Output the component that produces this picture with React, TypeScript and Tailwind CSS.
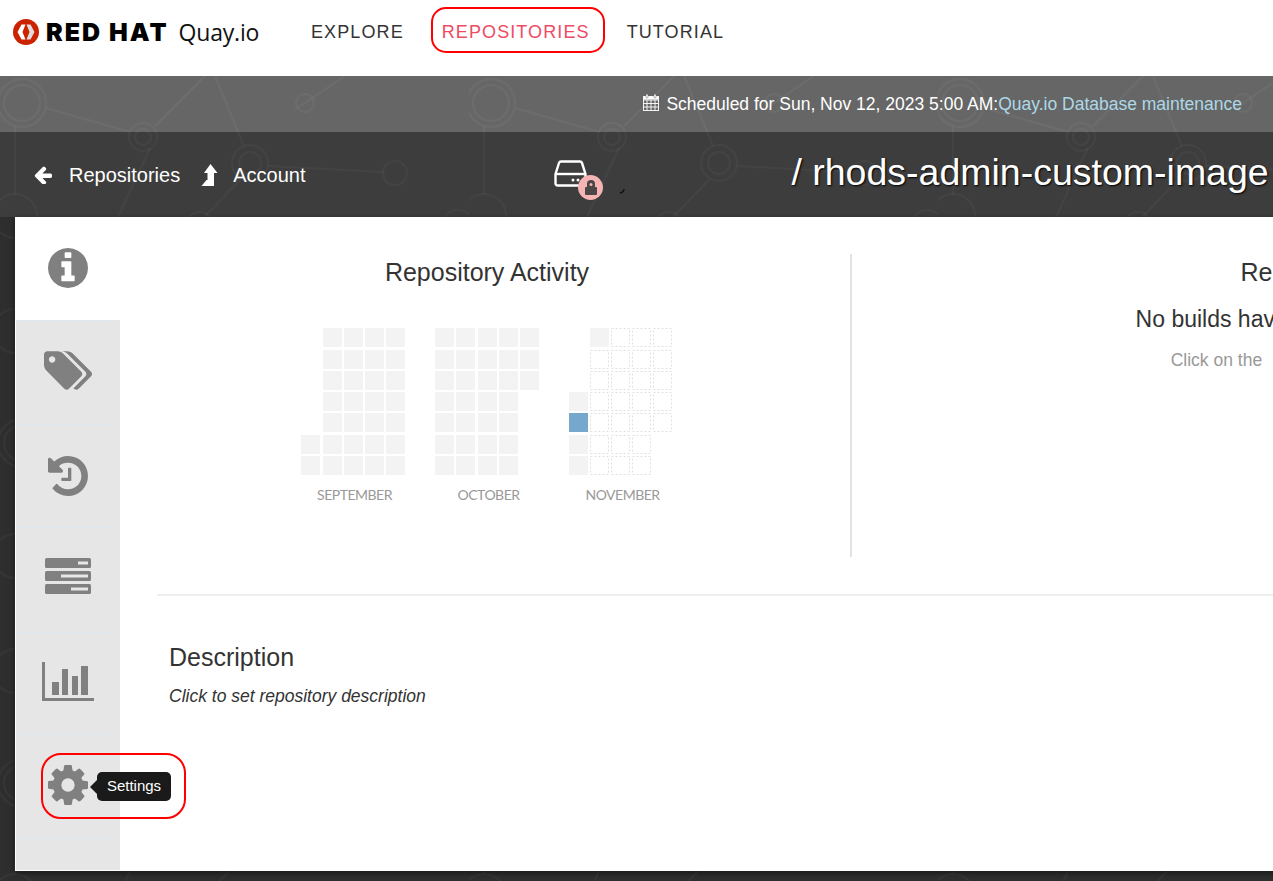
const sans = "font-['Liberation_Sans',Arial,sans-serif]";

const NetworkPattern = () => (
    <svg className="absolute inset-0 w-full h-full" aria-hidden="true">
        <defs>
            <pattern id="net" x="0" y="0" width="469" height="340" patternUnits="userSpaceOnUse">
                <g fill="none" stroke="#ffffff" strokeOpacity="0.035" strokeWidth="2">
                    <circle cx="22" cy="27" r="24" />
                    <circle cx="22" cy="27" r="18" />
                    <circle cx="143" cy="61" r="14" />
                    <circle cx="143" cy="61" r="8" />
                    <circle cx="250" cy="87" r="18" />
                    <circle cx="250" cy="87" r="11" />
                    <circle cx="395" cy="97" r="12" />
                    <circle cx="305" cy="27" r="9" />
                    <circle cx="200" cy="150" r="14" />
                    <circle cx="458" cy="150" r="16" />
                    <circle cx="15" cy="140" r="22" />
                    <circle cx="15" cy="255" r="22" />
                    <path d="M46 32 L130 56 M155 50 L205 0 M150 72 L100 180 M215 0 L244 70 M268 90 L383 96 M296 33 L345 0 M240 104 L205 140 M15 50 L15 118 M15 162 L15 233" />
                </g>
            </pattern>
        </defs>
        <rect width="100%" height="100%" fill="url(#net)" />
    </svg>
);

const Logo = () => (
    <div className="flex items-center ml-[13px] w-[250px]">
        <svg width="26" height="26" viewBox="0 0 26 26" className="shrink-0">
            <circle cx="13" cy="13" r="13" fill="#cc2200" />
            <path d="M8.500 5.500 H12.500 L9.500 13 L12.500 20.500 H8.500 L4.500 13 Z" fill="#ffffff" />
            <path d="M17.500 5.500 H13.500 L16.500 13 L13.500 20.500 H17.500 L21.500 13 Z" fill="#dddddd" />
        </svg>
        <span className="ml-[7px] font-['Inter',sans-serif] font-black text-[25px] leading-none tracking-[2px] text-black whitespace-pre">
            RED HAT
        </span>
        <span className="ml-[10px] font-['Open_Sans',sans-serif] text-[23px] leading-none tracking-[-0.2px] text-[#111]">
            Quay.io
        </span>
    </div>
);

const Header = () => (
    <div className="relative h-[76px] bg-white flex items-start">
        <div className="h-[64px] flex items-center">
            <Logo />
        </div>
        <nav className="h-[64px] flex items-center ml-[48px] text-[18px] tracking-[1.1px] text-[#333]">
            <a className="mr-[38px]">EXPLORE</a>
            <a className="mr-[37px] text-[#ee4b63]">REPOSITORIES</a>
            <a>TUTORIAL</a>
        </nav>
        <div className="absolute left-[431px] top-[7px] w-[174px] h-[46px] rounded-[15px] border-2 border-[#ff0000]" />
    </div>
);

const CalendarIcon = () => (
    <svg width="16" height="17" viewBox="0 0 16 17" className="shrink-0 mt-[-3px]">
        <g fill="none" stroke="#ffffff" strokeWidth="1" strokeOpacity="0.9">
            <rect x="0.500" y="2.500" width="15" height="14" />
            <path d="M0.500 6 H15.500 M0.500 9.500 H15.500 M0.500 13 H15.500 M4 6 V16.500 M8 6 V16.500 M12 6 V16.500" />
        </g>
        <rect x="0.500" y="2.500" width="15" height="3" fill="#ffffff" />
        <rect x="3" y="0" width="2" height="4" rx="1" fill="#ffffff" stroke="#666666" strokeWidth="0.500" />
        <rect x="11" y="0" width="2" height="4" rx="1" fill="#ffffff" stroke="#666666" strokeWidth="0.500" />
    </svg>
);

const MaintenanceBar = () => (
    <div className={`relative h-[56px] bg-white/[0.27] flex items-center justify-end pr-[31px] text-[17.5px] text-white ${sans}`}>
        <CalendarIcon />
        <span className="ml-[7px]">Scheduled for Sun, Nov 12, 2023 5:00 AM:</span>
        <a className="text-[#add8e6]">Quay.io Database maintenance</a>
    </div>
);

const RepoIcon = () => (
    <div className="relative w-[36px] h-[30px]">
        <svg width="33" height="28" viewBox="0 0 33 28" className="absolute left-0 top-[2px]">
            <g fill="none" stroke="#ffffff" strokeWidth="2.400" strokeLinejoin="round">
                <path d="M7 1.500 H26 Q27.500 1.500 28 3 L31.500 14 V23 Q31.500 25.500 29 25.500 H4 Q1.500 25.500 1.500 23 V14 L5 3 Q5.500 1.500 7 1.500 Z" />
                <path d="M1.500 14 H31.500" />
            </g>
            <circle cx="19" cy="20" r="1.500" fill="#ffffff" />
            <circle cx="24" cy="20" r="1.500" fill="#ffffff" />
        </svg>
        {/* private repo badge */}
        <div className="absolute left-[24px] top-[17px] w-[25px] h-[25px] rounded-full bg-[#f4b4b4] flex items-center justify-center">
            <svg width="14" height="17" viewBox="0 0 14 17">
                <path d="M3 8 V5 a4 4 0 0 1 8 0 V8 h1 a1 1 0 0 1 1 1 v6 a1 1 0 0 1 -1 1 H2 a1 1 0 0 1 -1 -1 V9 a1 1 0 0 1 1 -1 Z" fill="#4a4646" />
                <circle cx="7" cy="5.500" r="1.500" fill="#f4b4b4" />
            </svg>
        </div>
    </div>
);

const TitleBar = () => (
    <div className={`relative h-[85px] bg-white/[0.07] flex items-center whitespace-nowrap text-white ${sans}`}>
        <div className="flex items-center ml-[34px] text-[20px]">
            <svg width="18" height="18" viewBox="128 128 1536 1536" fill="#ffffff">
                <path d="M1664 896v128q0 53-32.500 90.500t-84.500 37.500h-704l293 294q38 36 38 90t-38 90l-75 76q-37 37-90 37-52 0-91-37l-651-652q-37-37-37-90 0-52 37-91l651-650q38-38 91-38 52 0 90 38l75 74q38 38 38 91t-38 91l-293 293h704q52 0 84.500 37.500t32.500 90.500z" />
            </svg>
            <span className="ml-[17px]">Repositories</span>
            <svg width="17" height="22" viewBox="0 0 17 22" className="ml-[21px]" fill="#ffffff">
                <path d="M9.500 0 L16.500 9 H13 V22 H0.500 L5.500 16 H6.500 V9 H3 Z" />
            </svg>
            <span className="ml-[15px]">Account</span>
        </div>
        <div className="ml-[249px] mt-[-3px]">
            <RepoIcon />
        </div>
        <svg width="6" height="5" viewBox="0 0 6 5" className="ml-[29px] mt-[33px]" fill="none" stroke="#111111" strokeWidth="1.400">
            <path d="M5 0 Q5 3 1 4" />
        </svg>
        <h1 className="ml-[166px] text-[37.500px] font-normal leading-none [text-shadow:1px_1px_2px_#000] mt-[-3px]">
            / rhods-admin-custom-image
        </h1>
    </div>
);

const InfoIcon = () => (
    <svg width="40" height="40" viewBox="128 128 1536 1536" fill="#808080">
        <path d="M1152 1376v-160q0-14-9-23t-23-9h-96v-512q0-14-9-23t-23-9h-320q-14 0-23 9t-9 23v160q0 14 9 23t23 9h96v320h-96q-14 0-23 9t-9 23v160q0 14 9 23t23 9h448q14 0 23-9t9-23zm-128-896v-160q0-14-9-23t-23-9h-192q-14 0-23 9t-9 23v160q0 14 9 23t23 9h192q14 0 23-9t9-23zm640 416q0 209-103 385.500t-279.500 279.500-385.500 103-385.500-103-279.500-279.500-103-385.500 103-385.500 279.500-279.500 385.500-103 385.500 103 279.500 279.500 103 385.500z" />
    </svg>
);

const TagsIcon = () => (
    <svg width="48" height="39" viewBox="0 128 1899 1516" fill="#808080">
        <path d="M448 448q0-53-37.500-90.500t-90.500-37.500-90.500 37.500-37.500 90.500 37.500 90.500 90.500 37.500 90.500-37.500 37.500-90.500zm1067 576q0 53-37 90l-491 492q-39 37-91 37-53 0-90-37l-715-716q-38-37-64.500-101t-26.500-117v-416q0-52 38-90t90-38h416q53 0 117 26.500t102 64.500l715 714q37 39 37 91zm384 0q0 53-37 90l-491 492q-39 37-91 37-36 0-59-14t-53-45l470-470q37-37 37-90 0-52-37-91l-715-714q-38-38-102-64.500t-117-26.500h224q53 0 117 26.500t102 64.500l715 714q37 39 37 91z" />
    </svg>
);

const HistoryIcon = () => (
    <svg width="40" height="40" viewBox="128 128 1536 1536" fill="#808080">
        <path d="M1664 896q0 156-61 298t-164 245-245 164-298 61q-172 0-327-72.500t-264-204.500q-7-10-6.500-22.500t8.500-20.500l137-138q10-9 25-9 16 2 23 12 73 95 179 147t225 52q104 0 198.500-40.500t163.500-109.500 109.500-163.500 40.500-198.500-40.500-198.500-109.500-163.500-163.500-109.500-198.500-40.500q-98 0-188 35.500t-160 101.500l137 138q31 30 14 69-17 40-59 40h-448q-26 0-45-19t-19-45v-448q0-42 40-59 39-17 69 14l130 129q107-101 244.500-156.500t284.500-55.500q156 0 298 61t245 164 164 245 61 298zm-640-288v448q0 14-9 23t-23 9h-320q-14 0-23-9t-9-23v-64q0-14 9-23t23-9h224v-352q0-14 9-23t23-9h64q14 0 23 9t9 23z" />
    </svg>
);

const ServerIcon = () => (
    <svg width="46" height="36" viewBox="0 0 46 36">
        <rect x="0" y="0" width="46" height="10" rx="1.500" fill="#808080" />
        <rect x="0" y="13" width="46" height="10" rx="1.500" fill="#808080" />
        <rect x="0" y="26" width="46" height="10" rx="1.500" fill="#808080" />
        <rect x="33" y="3.500" width="10" height="3" fill="#e6e6e6" />
        <rect x="16" y="16.500" width="27" height="3" fill="#e6e6e6" />
        <rect x="26" y="29.500" width="17" height="3" fill="#e6e6e6" />
    </svg>
);

const ChartIcon = () => (
    <svg width="52" height="39" viewBox="0 0 52 39" fill="#808080">
        <rect x="0" y="0" width="3" height="39" />
        <rect x="0" y="36" width="52" height="3" />
        <rect x="10" y="20" width="7" height="13" />
        <rect x="20" y="7" width="6" height="26" />
        <rect x="30" y="14" width="6" height="19" />
        <rect x="39" y="4" width="7" height="29" />
    </svg>
);

const CogIcon = () => (
    <svg width="40" height="40" viewBox="0 0 1536 1536" fill="#808080">
        <path d="M1024 768q0-106-75-181t-181-75-181 75-75 181 75 181 181 75 181-75 75-181zm512-109v222q0 12-8 23t-20 13l-185 28q-19 54-39 91 35 50 107 138 10 12 10 25t-9 23q-27 37-99 108t-94 71q-12 0-26-9l-138-108q-44 23-91 38-16 136-29 186-7 28-36 28h-222q-14 0-24.500-8.500t-11.500-21.500l-28-184q-49-16-90-37l-141 107q-10 9-25 9-14 0-25-11-126-114-165-168-7-10-7-23 0-12 8-23 15-21 51-66.500t54-70.500q-27-50-41-99l-183-27q-13-2-21-12.500t-8-23.500v-222q0-12 8-23t19-13l186-28q14-46 39-92-40-57-107-138-10-12-10-24 0-10 9-23 26-36 98.500-107.500t94.500-71.500q13 0 26 10l138 107q44-23 91-38 16-136 29-186 7-28 36-28h222q14 0 24.500 8.500t11.500 21.500l28 184q49 16 90 37l142-107q9-9 24-9 13 0 25 10 129 119 165 170 7 8 7 22 0 12-8 23-15 21-51 66.500t-54 70.500q26 50 41 98l183 28q13 2 21 12.500t8 23.500z" />
    </svg>
);

const Sidebar = () => (
    <div className="w-[105px] shrink-0 flex flex-col bg-[#e6e6e6] border-l border-b border-white">
        <div className="h-[103px] bg-white flex items-center justify-center pb-[2px] pr-[1px]">
            <InfoIcon />
        </div>
        <div className="h-[104px] border-t border-[#dfe8ef] flex items-center justify-center pb-[4px] pr-[1px]">
            <TagsIcon />
        </div>
        <div className="h-[103px] border-t border-[#dfe8ef] flex items-center justify-center pr-[1px]">
            <HistoryIcon />
        </div>
        <div className="h-[105px] border-t border-[#dfe8ef] flex items-center justify-center pb-[8px] pr-[1px]">
            <ServerIcon />
        </div>
        <div className="h-[102px] border-t border-[#dfe8ef] flex items-center justify-center pb-[4px] pr-[1px]">
            <ChartIcon />
        </div>
        <div className="h-[104px] border-t border-[#dfe8ef] flex items-center justify-center pb-[4px] pr-[1px]">
            <CogIcon />
        </div>
        <div className="flex-1 border-t border-[#dfe8ef]" />
    </div>
);

const ROWS = [0, 22, 43, 64, 85, 107, 128];

type Cell = "solid" | "blue" | "future" | null;

const Month = ({ label, xs, cell }: { label: string; xs: number[]; cell: (c: number, r: number) => Cell }) => (
    <div className="w-[104px] flex flex-col items-center">
        <svg width="104" height="148" viewBox="0 0 104 148">
            {xs.map((x, c) =>
                ROWS.map((y, r) => {
                    const kind = cell(c, r);
                    if (!kind) return null;
                    if (kind === "future") {
                        return (
                            <rect
                                key={`${c}-${r}`}
                                x={x + 0.5}
                                y={y + 0.5}
                                width="18"
                                height="18"
                                fill="none"
                                stroke="#e0e0e0"
                                strokeDasharray="2 2"
                            />
                        );
                    }
                    return (
                        <rect key={`${c}-${r}`} x={x} y={y} width="19" height="19" fill={kind === "blue" ? "#76a7cd" : "#f3f3f3"} />
                    );
                })
            )}
        </svg>
        <div className="mt-[9px] pl-[4px] font-['Lato',sans-serif] text-[14px] leading-[20px] tracking-[-0.5px] text-[#999]">{label}</div>
    </div>
);

const september = (c: number, r: number): Cell => (c === 0 && r < 5 ? null : "solid");
const october = (c: number, r: number): Cell => (c === 4 && r > 2 ? null : "solid");
const november = (c: number, r: number): Cell => {
    if (c === 0) {
        if (r < 3) return null;
        return r === 4 ? "blue" : "solid";
    }
    if (c === 1 && r === 0) return "solid";
    if (c === 4 && r > 4) return null;
    return "future";
};

const Activity = () => (
    <div className="w-[660px] shrink-0 h-[303px] flex flex-col items-center">
        <h2 className="text-[25px] leading-[36px] font-normal text-[#333]">Repository Activity</h2>
        <div className="flex gap-[30px] mt-[38px] ml-[-1px]">
            <Month label="SEPTEMBER" xs={[0, 22, 43, 64, 85]} cell={september} />
            <Month label="OCTOBER" xs={[0, 21, 43, 64, 85]} cell={october} />
            <Month label="NOVEMBER" xs={[0, 21, 42, 63, 84]} cell={november} />
        </div>
    </div>
);

const Builds = () => (
    <div className="w-[996px] shrink-0 text-center whitespace-nowrap">
        <h2 className="pl-[2px] text-[25px] leading-[36px] font-normal text-[#333]">Recent Repo Builds</h2>
        <div className="mt-[11px] pl-[8px] text-[23px] leading-[36px] text-[#333]">No builds have been run for this repository.</div>
        <div className="mt-[5px] pr-[4px] text-[17.500px] leading-[36px] text-[#999]">
            Click on the <span className="inline-block w-[20px]" /> Builds tab to start a new build.
        </div>
    </div>
);

const Overview = () => (
    <div className="flex-1 pt-[37px] pl-[37px]">
        <div className="flex">
            <Activity />
            <div className="ml-[33px] w-[2px] bg-[#e2e2e2] shrink-0" />
            <Builds />
        </div>
        <div className="mt-[37px] h-[2px] bg-[#eeeeee]" />
        <div className="pl-[12px] pt-[43px]">
            <h3 className="text-[25px] leading-[36px] font-normal text-[#333]">Description</h3>
            <p className="mt-[8px] text-[17.500px] leading-[26px] italic text-[#333]">Click to set repository description</p>
        </div>
    </div>
);

const SettingsCallout = () => (
    <>
        <div className="absolute left-[26px] top-[536px] w-[145px] h-[66px] rounded-[20px] border-2 border-[#ff0000]" />
        <div className="absolute left-[75px] top-[555px] h-[29px] flex items-center">
            <span className="w-0 h-0 border-y-[7px] border-y-transparent border-r-[7px] border-r-[#1a1a1a]" />
            <div className="w-[74px] h-[29px] rounded-[5px] bg-[#1a1a1a] text-white text-[15px] flex items-center justify-center">
                Settings
            </div>
        </div>
    </>
);

export default function App() {
    return (
        <div className={`relative w-full h-[881px] overflow-hidden bg-[#2e2e2e] ${sans}`}>
            <div className="absolute inset-x-0 top-[76px] bottom-0">
                <NetworkPattern />
            </div>
            <Header />
            <MaintenanceBar />
            <TitleBar />
            <div className="relative ml-[15px] w-[1900px] h-[654px] flex bg-white shadow-[0_2px_6px_rgba(0,0,0,0.5)]">
                <Sidebar />
                <Overview />
                <SettingsCallout />
            </div>
        </div>
    );
}
